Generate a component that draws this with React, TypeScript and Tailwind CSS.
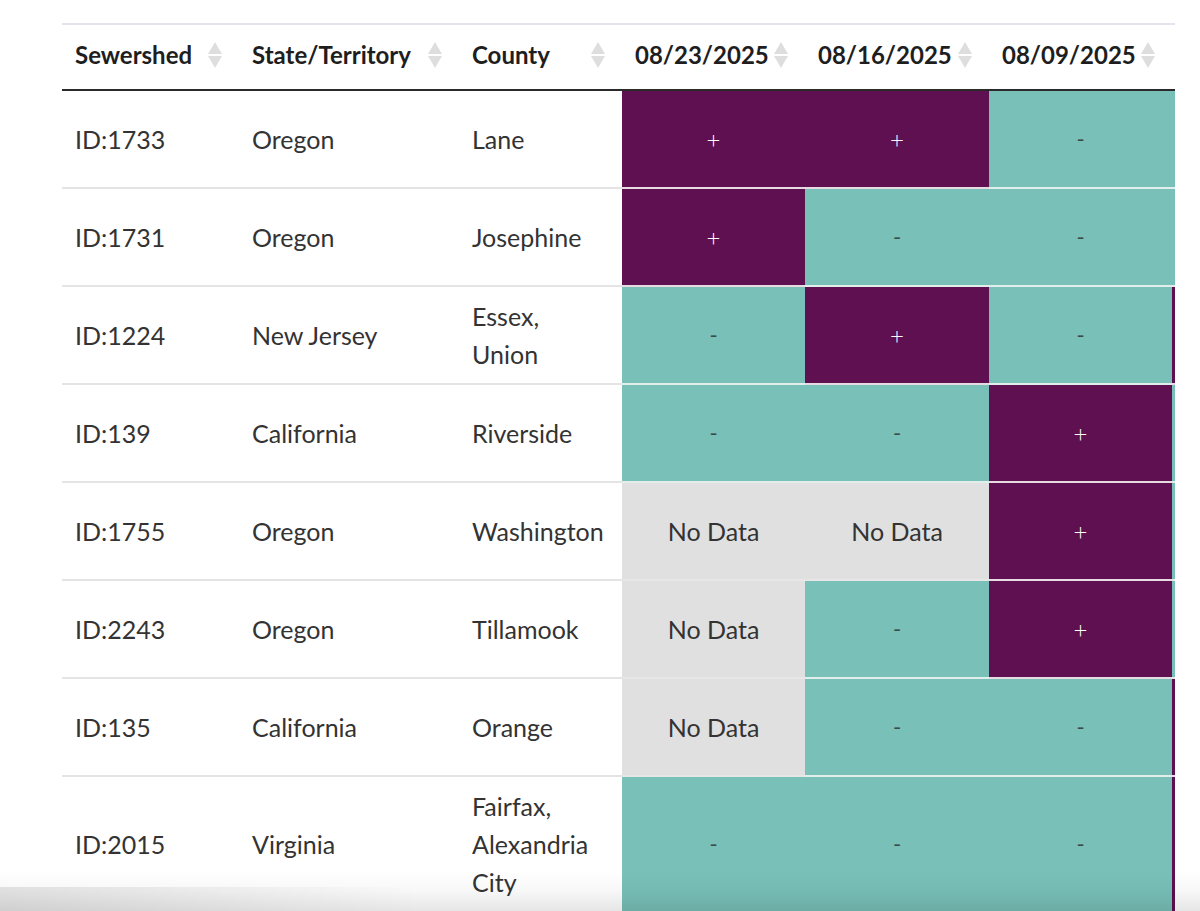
import React from 'react';

type Result = '+' | '-' | 'nd';

interface Row {
  id: string;
  state: string;
  county: string[];
  results: Result[];
}

const dates = ['08/23/2025', '08/16/2025', '08/09/2025'];

// last value belongs to the next week's column, which only peeks in at the right edge
const rows: Row[] = [
  { id: 'ID:1733', state: 'Oregon', county: ['Lane'], results: ['+', '+', '-', '-'] },
  { id: 'ID:1731', state: 'Oregon', county: ['Josephine'], results: ['+', '-', '-', '-'] },
  { id: 'ID:1224', state: 'New Jersey', county: ['Essex,', 'Union'], results: ['-', '+', '-', '+'] },
  { id: 'ID:139', state: 'California', county: ['Riverside'], results: ['-', '-', '+', '-'] },
  { id: 'ID:1755', state: 'Oregon', county: ['Washington'], results: ['nd', 'nd', '+', '-'] },
  { id: 'ID:2243', state: 'Oregon', county: ['Tillamook'], results: ['nd', '-', '+', '-'] },
  { id: 'ID:135', state: 'California', county: ['Orange'], results: ['nd', '-', '-', '+'] },
  { id: 'ID:2015', state: 'Virginia', county: ['Fairfax,', 'Alexandria', 'City'], results: ['-', '-', '-', '+'] },
];

const SortIcon: React.FC = () => (
  <svg width="14" height="26" viewBox="0 0 14 26" className="shrink-0">
    <polygon points="7,0 14,12 0,12" fill="#dedede" />
    <polygon points="0,14 14,14 7,26" fill="#dedede" />
  </svg>
);

const cellColor: Record<Result, string> = {
  nd: 'bg-[#e0e0e0] border-[#e6e6e6] text-[#333]',
  '+': 'bg-[#5e1050] border-[#e6dbe3] text-white text-[24px] font-light',
  '-': 'bg-[#78c0b8] border-[#e2eeec] text-[#3a4a48] text-[22px]',
};

const ResultCell: React.FC<{ value: Result; hideText?: boolean }> = ({ value, hideText }) => (
  <div className={`flex items-center justify-center border-b-2 ${cellColor[value]}`}>
    {hideText ? null : value === 'nd' ? 'No Data' : value}
  </div>
);

const App: React.FC = () => {
  const headers = ['Sewershed', 'State/Territory', 'County', ...dates];

  return (
    <div className="relative h-[911px] overflow-hidden bg-white pt-[23px] font-['Lato',sans-serif]">
      <div className="ml-[62px] w-[1113px] overflow-hidden border-t-2 border-[#e4e4f0]">
        <div className="grid w-max grid-cols-[177px_220px_163px_183px_184px_183px_183px] grid-rows-[66px] auto-rows-[minmax(98px,auto)] text-[25px] leading-[38px] text-[#333]">
          {headers.map((h) => (
            <div
              key={h}
              className="flex items-center justify-between gap-1 border-b-2 border-[#2a2a2a] pb-[4px] pl-[13px] pr-[17px] text-[24px] font-bold text-[#1e1e1e]"
            >
              <span className="whitespace-nowrap">{h}</span>
              <SortIcon />
            </div>
          ))}
          <div className="border-b-2 border-[#2a2a2a]" />

          {rows.map((row) => (
            <React.Fragment key={row.id}>
              <div className="flex items-center border-b-2 border-[#e4e4e4] px-[13px] py-[10px]">{row.id}</div>
              <div className="flex items-center border-b-2 border-[#e4e4e4] px-[13px] py-[10px]">{row.state}</div>
              <div className="flex flex-col justify-center border-b-2 border-[#e4e4e4] px-[13px] py-[10px]">
                {row.county.map((line) => (
                  <span key={line} className="whitespace-nowrap">{line}</span>
                ))}
              </div>
              {row.results.map((r, i) => (
                <ResultCell key={i} value={r} hideText={i === 3} />
              ))}
            </React.Fragment>
          ))}
        </div>
      </div>

      {/* screenshot edge shadow */}
      <div className="pointer-events-none absolute inset-x-0 bottom-0 h-[40px] bg-gradient-to-t from-black/10 via-black/[0.03] to-transparent" />
      <div className="pointer-events-none absolute bottom-0 left-0 h-[24px] w-[420px] bg-gradient-to-r from-black/10 to-transparent" />
    </div>
  );
};

export default App;
